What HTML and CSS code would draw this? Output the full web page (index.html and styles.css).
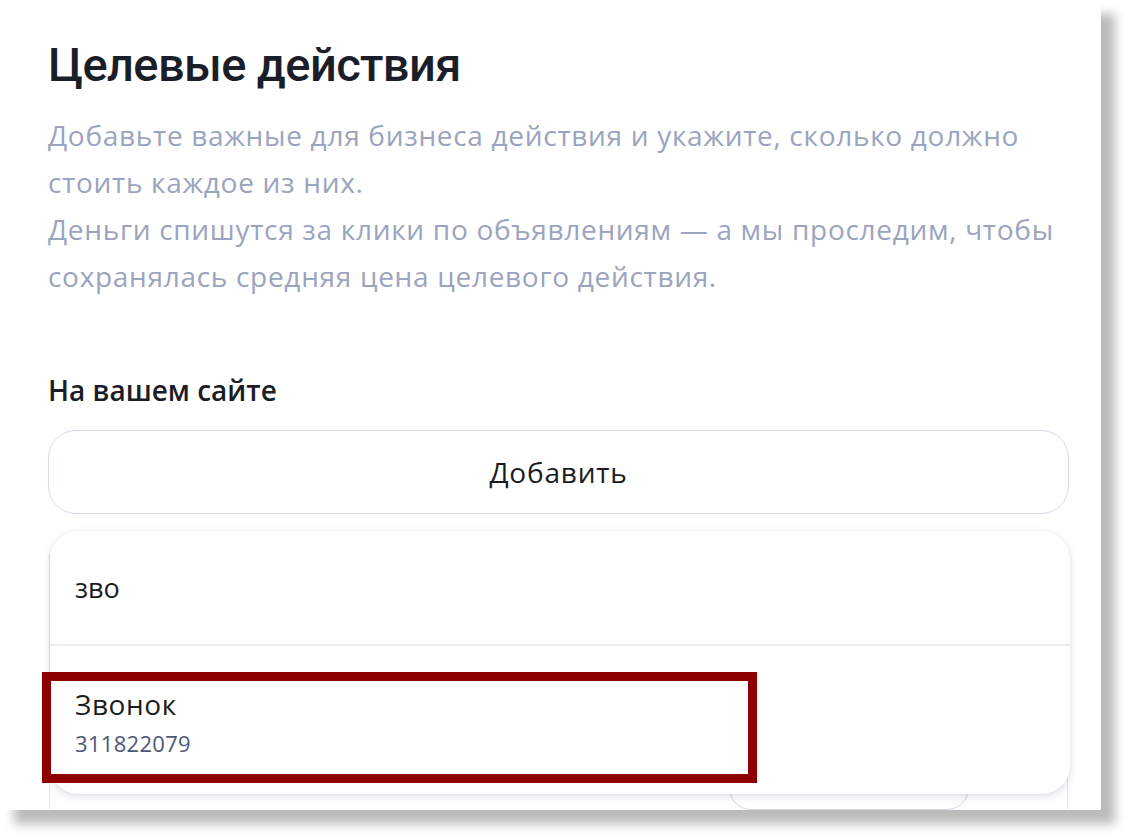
FILE: index.html
```html
<!DOCTYPE html>
<html lang="ru">
<head>
<meta charset="utf-8">
<title>Целевые действия</title>
<link rel="stylesheet" href="styles.css">
</head>
<body>
<div class="frame">
  <h1 class="title">Целевые действия</h1>
  <p class="desc">Добавьте важные для бизнеса действия и укажите, сколько должно стоить каждое из них.<br>Деньги спишутся за клики по объявлениям — а мы проследим, чтобы сохранялась средняя цена целевого действия.</p>
  <h2 class="section">На вашем сайте</h2>
  <div class="field">
    <button class="add">Добавить</button>
    <div class="panel"><div class="panel-btn"></div></div>
    <div class="dropdown">
      <div class="search">зво</div>
      <div class="option">
        <div class="opt-name">Звонок</div>
        <div class="opt-id">311822079</div>
      </div>
    </div>
    <div class="annotation"></div>
  </div>
</div>
</body>
</html>
```
FILE: styles.css
```css
html, body {
  margin: 0;
  padding: 0;
  background: #ffffff;
}
body {
  width: 1131px;
  height: 840px;
  overflow: hidden;
}
.frame {
  width: 1101px;
  height: 810px;
  box-sizing: border-box;
  padding: 0 32px 0 48px;
  background: #ffffff;
  overflow: hidden;
  box-shadow: 14px 14px 10px rgba(0, 0, 0, 0.27);
  position: relative;
}
.title {
  margin: 0;
  padding-top: 36px;
  font-family: Roboto, "Noto Sans", sans-serif;
  font-weight: 500;
  font-size: 47px;
  line-height: 58px;
  color: #1a1e29;
  letter-spacing: -0.6px;
}
.desc {
  margin: 18px 0 0;
  font-family: "Open Sans", "Noto Sans", sans-serif;
  font-size: 28px;
  line-height: 47px;
  letter-spacing: 0.7px;
  color: #9ba4be;
  max-width: 1021px;
}
.section {
  margin: 72px 0 0;
  font-family: "Open Sans", "Noto Sans", sans-serif;
  font-weight: 600;
  font-size: 28px;
  line-height: 36px;
  color: #1a1d26;
}
.field {
  position: relative;
  margin-top: 22px;
}
.add {
  display: block;
  width: 1021px;
  height: 84px;
  box-sizing: border-box;
  border: 1.5px solid #d6d9e8;
  border-radius: 28px;
  background: #ffffff;
  font-family: "Open Sans", "Noto Sans", sans-serif;
  font-size: 28px;
  letter-spacing: 0.8px;
  color: #1b1c21;
  padding: 0;
}
.panel {
  margin: 40px 0 0 1px;
  width: 1019px;
  height: 300px;
  box-sizing: border-box;
  border-left: 1.5px solid #e3e6f0;
  border-right: 1.5px solid #e3e6f0;
  display: flex;
  justify-content: flex-end;
  align-items: flex-start;
  padding-right: 98px;
  padding-top: 196px;
}
.panel-btn {
  width: 240px;
  height: 60px;
  box-sizing: border-box;
  border: 1.5px solid #d3d7e6;
  border-radius: 22px;
}
.dropdown {
  position: absolute;
  left: 2px;
  top: 101px;
  width: 1020px;
  height: 263px;
  background: #ffffff;
  border-radius: 28px;
  box-shadow: 0 3px 8px rgba(40, 50, 90, 0.14), 0 0 2px rgba(40, 50, 90, 0.08);
  overflow: hidden;
}
.search {
  height: 115px;
  box-sizing: border-box;
  padding-left: 25px;
  border-bottom: 2px solid #e9edf5;
  display: flex;
  align-items: center;
  font-family: "Open Sans", "Noto Sans", sans-serif;
  font-size: 27px;
  color: #1b1c21;
}
.option {
  padding: 38px 0 0 25px;
  font-family: "Open Sans", "Noto Sans", sans-serif;
}
.opt-name {
  font-size: 28px;
  line-height: 40px;
  letter-spacing: 0.6px;
  color: #1b1c21;
}
.opt-id {
  font-size: 22px;
  line-height: 38px;
  letter-spacing: 0.3px;
  color: #4b5778;
}
.annotation {
  position: absolute;
  left: -6px;
  top: 242px;
  width: 715px;
  height: 111px;
  box-sizing: border-box;
  border: 9px solid #8e0000;
}
```
